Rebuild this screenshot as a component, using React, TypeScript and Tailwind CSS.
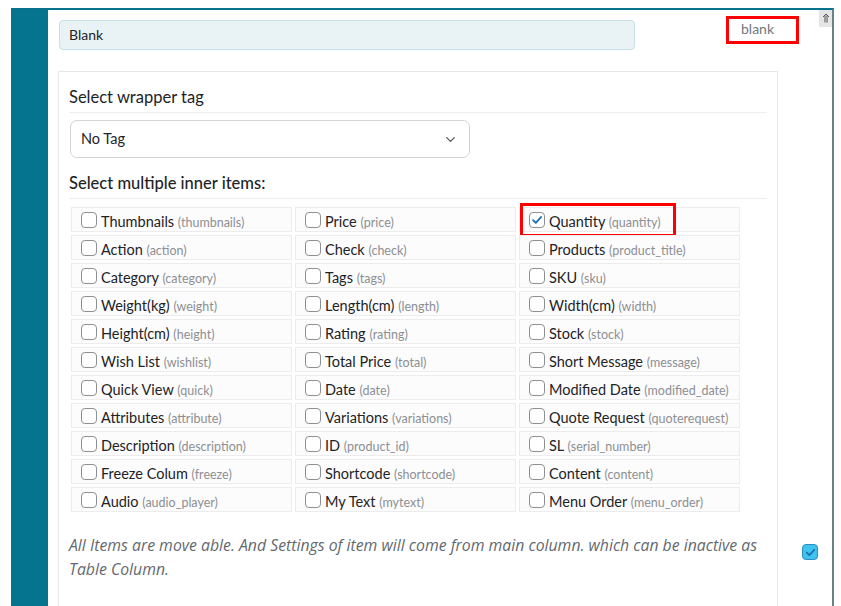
import { ChevronDown } from "lucide-react";

type Item = { label: string; key: string; checked?: boolean; marked?: boolean };

const items: Item[] = [
  { label: "Thumbnails", key: "thumbnails" },
  { label: "Price", key: "price" },
  { label: "Quantity", key: "quantity", checked: true, marked: true },
  { label: "Action", key: "action" },
  { label: "Check", key: "check" },
  { label: "Products", key: "product_title" },
  { label: "Category", key: "category" },
  { label: "Tags", key: "tags" },
  { label: "SKU", key: "sku" },
  { label: "Weight(kg)", key: "weight" },
  { label: "Length(cm)", key: "length" },
  { label: "Width(cm)", key: "width" },
  { label: "Height(cm)", key: "height" },
  { label: "Rating", key: "rating" },
  { label: "Stock", key: "stock" },
  { label: "Wish List", key: "wishlist" },
  { label: "Total Price", key: "total" },
  { label: "Short Message", key: "message" },
  { label: "Quick View", key: "quick" },
  { label: "Date", key: "date" },
  { label: "Modified Date", key: "modified_date" },
  { label: "Attributes", key: "attribute" },
  { label: "Variations", key: "variations" },
  { label: "Quote Request", key: "quoterequest" },
  { label: "Description", key: "description" },
  { label: "ID", key: "product_id" },
  { label: "SL", key: "serial_number" },
  { label: "Freeze Colum", key: "freeze" },
  { label: "Shortcode", key: "shortcode" },
  { label: "Content", key: "content" },
  { label: "Audio", key: "audio_player" },
  { label: "My Text", key: "mytext" },
  { label: "Menu Order", key: "menu_order" },
];

function Checkbox({ checked }: { checked?: boolean }) {
  return (
    <span className="w-4 h-4 shrink-0 rounded-[4px] border border-[#8c8f94] bg-white flex items-center justify-center">
      {checked && (
        <svg viewBox="0 0 16 16" className="w-[14px] h-[14px]">
          <path d="M3.5 8.2 L6.6 11.2 L12.6 4.6" fill="none" stroke="#2271b1" strokeWidth="2.2" strokeLinecap="round" strokeLinejoin="round" />
        </svg>
      )}
    </span>
  );
}

export default function App() {
  return (
    <div className="w-[841px] h-[606px] overflow-hidden bg-white pt-[8px] pl-[11px] font-['Lato','Liberation_Sans',sans-serif] text-[#1d2327]">
      <div className="relative w-[823px] h-[600px] flex border-t-2 border-t-[#08728c] border-r-2 border-r-[#6e7f88]">
        <div className="w-[37px] shrink-0 bg-[#05758f]" />

        <div className="flex-1 flex flex-col">
          <div className="flex items-start pt-[6px] pl-[11px]">
            <div className="mt-[4px] w-[576px] h-[30px] rounded-[4px] border border-[#c7e0e7] bg-[#e9f3f6] px-[9px] flex items-center text-[14px] leading-[20px] pb-px">
              Blank
            </div>
            <div className="ml-[91px] w-[73px] h-[28px] border-[3px] border-[#ff0000] pl-[12px] flex items-center text-[14px] leading-[20px] pb-[2px] text-[#72777c]">
              blank
            </div>
          </div>

          <div className="flex mt-[21px]">
            <div className="ml-[10px] w-[720px] h-[600px] border border-[#e6e6e6] px-[10px]">
              <div className="mt-[13px] pb-[3px] border-b border-[#eeeeee] text-[16.5px] leading-[24px]">
                Select wrapper tag
              </div>
              <div className="mt-[7px] ml-px w-[400px] h-[38px] rounded-[7px] border border-[#d4d4d4] bg-white pl-[10px] pr-[11px] flex items-center justify-between text-[14.5px]">
                <span>No Tag</span>
                <ChevronDown className="w-[15px] h-[15px] text-[#50575e]" strokeWidth={2} />
              </div>
              <div className="mt-[13px] pb-[3px] border-b border-[#eeeeee] text-[16.5px] leading-[24px] font-medium">
                Select multiple inner items:
              </div>

              <div className="mt-[8px] ml-[2px] grid grid-cols-[221px_221px_221px] gap-x-[3px] gap-y-[3px]">
                {items.map((it) => (
                  <div
                    key={it.key}
                    className="relative h-[25px] border border-[#ececec] bg-[#fcfcfc] pl-[9px] flex items-center gap-[4px] whitespace-nowrap"
                  >
                    <Checkbox checked={it.checked} />
                    <span className="mt-[5px] text-[14.5px] leading-[20px] text-[#1d2327]">
                      {it.label} <span className="text-[12.5px] text-[#8c8f94]">({it.key})</span>
                    </span>
                    {it.marked && (
                      <span className="absolute left-0 top-[-5px] w-[156px] h-[34px] border-[3px] border-[#ff0000]" />
                    )}
                  </div>
                ))}
              </div>

              <p className="mt-[21px] font-['Open_Sans','Liberation_Sans',sans-serif] text-[15.8px] leading-[24px] italic text-[#646970]">
                All Items are move able. And Settings of item will come from main column. which can be inactive as Table Column.
              </p>
            </div>

            <div className="flex-1 pl-[24px] pt-[473px]">
              <span className="w-4 h-4 rounded-[4px] border border-[#2b8fc4] bg-[#3cc3f0] flex items-center justify-center">
                <svg viewBox="0 0 16 16" className="w-[13px] h-[13px]">
                  <path d="M3.5 8.2 L6.6 11.2 L12.6 4.6" fill="none" stroke="#1f6fae" strokeWidth="2.2" strokeLinecap="round" strokeLinejoin="round" />
                </svg>
              </span>
            </div>
          </div>
        </div>

        <div className="absolute right-0 top-0 w-[13px] h-[17px] bg-[#e5e5e5] flex items-start justify-center pt-[3px]">
          <svg viewBox="0 0 8 10" className="w-[8px] h-[10px]">
            <path d="M1 4 L4 1 L7 4" fill="none" stroke="#555" strokeWidth="1" />
            <path d="M3 2.5 V9.5 M5 2.5 V9.5" fill="none" stroke="#555" strokeWidth="1" />
          </svg>
        </div>
      </div>
    </div>
  );
}
